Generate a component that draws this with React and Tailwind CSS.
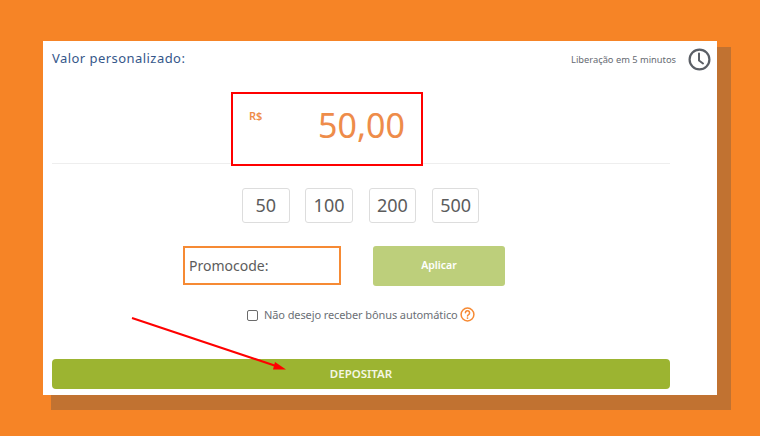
import React from "react";

const amounts = ["50", "100", "200", "500"];

const App = () => {
  return (
    <div className="relative h-[436px] w-[760px] overflow-hidden bg-[#f68426] pl-[43px] pt-[41px] font-['Noto_Sans',sans-serif]">
      {/* sombra atras do card */}
      <div className="absolute left-[51px] top-[47px] h-[363px] w-[680px] bg-[#c17231]" />

      <div className="relative h-[354px] w-[674px] bg-white pl-[9px] pt-[7px]">
        <div className="flex h-[22px] w-[659px] items-start justify-between">
          <span className="text-[13px] leading-[20px] tracking-[0.45px] text-[#35578a]">
            Valor personalizado:
          </span>
          <div className="flex items-center">
            <span className="text-[9.3px] leading-[22px] text-[#666a72]">
              Liberação em 5 minutos
            </span>
            <svg className="ml-[12px] h-[23px] w-[23px]" viewBox="0 0 23 23" fill="none">
              <circle cx="11.5" cy="11.5" r="9.9" stroke="#5b5f66" strokeWidth="2.2" />
              <path d="M11 5.5v7l4 3" stroke="#5b5f66" strokeWidth="2" strokeLinecap="round" strokeLinejoin="round" />
            </svg>
          </div>
        </div>

        <div className="relative z-10 ml-[179px] mt-[22px] flex h-[74px] w-[192px] items-start justify-between border-2 border-[#ff0000] bg-white pl-[16px] pr-[16px]">
          <span className="mt-[15px] text-[11px] font-semibold leading-[14px] text-[#ee8c4a]">R$</span>
          <span className="mt-[9px] text-[34px] leading-[44px] text-[#ee8c4a]">50,00</span>
        </div>

        <div className="-mt-[3px] h-px w-[618px] bg-[#eeeeee]" />

        <div className="ml-[190px] mt-[24px] flex gap-[15.8px]">
          {amounts.map((amount) => (
            <button
              key={amount}
              className="flex h-[35px] w-[47.5px] items-center justify-center rounded-[3px] border border-[#dddddd] bg-white text-[18px] text-[#5c5c5c]"
            >
              {amount}
            </button>
          ))}
        </div>

        <div className="ml-[131px] mt-[23px] flex items-start gap-[32px]">
          <div className="flex h-[39px] w-[158px] items-center border-2 border-[#f68a34] pl-[4px] text-[14px] text-[#5c5c5c]">
            Promocode:
          </div>
          <button className="h-[40px] w-[132px] rounded-[3px] bg-[#bdcf7b] text-[10.5px] font-semibold text-white">
            Aplicar
          </button>
        </div>

        <div className="ml-[195px] mt-[19px] flex h-[20px] items-center">
          <span className="h-[11px] w-[11px] rounded-[2px] border border-[#6b6b6b] bg-white" />
          <span className="ml-[6px] text-[11px] tracking-[-0.1px] text-[#6b6f76]">
            Não desejo receber bônus automático
          </span>
          <svg className="-mt-[2px] ml-[2.500px] h-[15px] w-[15px]" viewBox="0 0 15 15" fill="none">
            <circle cx="7.5" cy="7.5" r="6.4" stroke="#f68a34" strokeWidth="1.5" />
            <path d="M5.4 5.8a2.1 2.1 0 1 1 3.2 1.8c-.7.4-1.1.8-1.1 1.5" stroke="#f68a34" strokeWidth="1.5" strokeLinecap="round" />
            <circle cx="7.5" cy="11.1" r="0.9" fill="#f68a34" />
          </svg>
        </div>

        <button className="mt-[34px] h-[30px] w-[618px] rounded-[4px] bg-[#9cb431] text-[11.5px] font-semibold text-[#f4f7e4]">
          DEPOSITAR
        </button>
      </div>

      {/* seta vermelha desenhada por cima */}
      <svg className="absolute left-0 top-0 z-20 h-[436px] w-[760px]" viewBox="0 0 760 436" fill="none">
        <path d="M132 318L276 366" stroke="#ff0000" strokeWidth="2" />
        <path d="M286 369.500L273 369.500L275 362Z" fill="#ff0000" />
      </svg>
    </div>
  );
};

export default App;
